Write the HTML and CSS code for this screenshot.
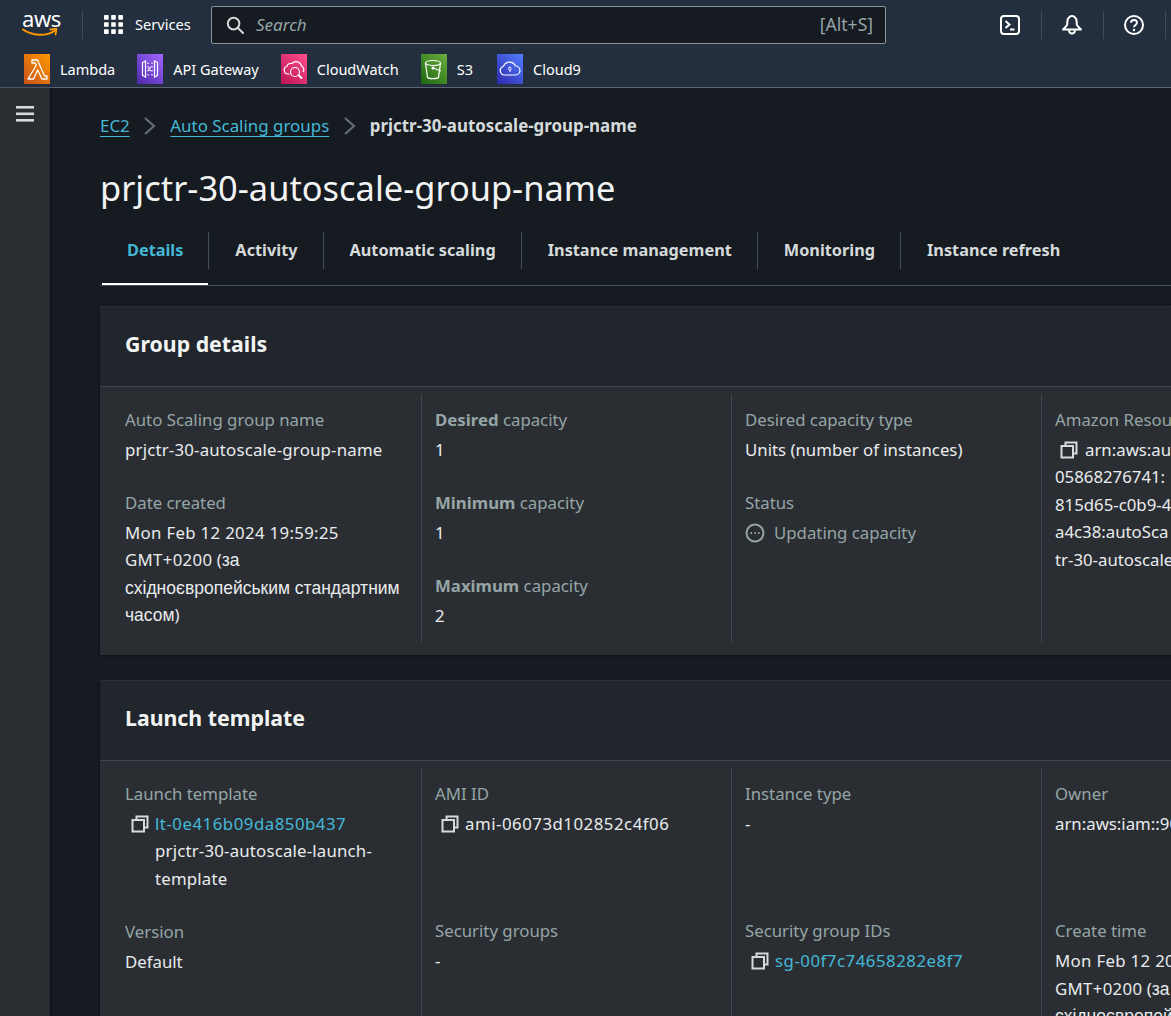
FILE: index.html
```html
<!DOCTYPE html>
<html lang="en">
<head>
<meta charset="utf-8">
<title>prjctr-30-autoscale-group-name</title>
<link rel="stylesheet" href="styles.css">
</head>
<body>
<header class="topbar">
  <div class="nav-row">
    <span class="aws-logo">
      <span class="aws-word">aws</span>
      <svg class="aws-smile" viewBox="0 0 36 11" width="36" height="11"><path d="M1 2.5C10 9 24 9.5 32.5 4" fill="none" stroke="#f90" stroke-width="2" stroke-linecap="round"/><path d="M28.5 2.5L34.5 2L33.5 7.5" fill="none" stroke="#f90" stroke-width="1.8" stroke-linecap="round" stroke-linejoin="round"/></svg>
    </span>
    <span class="vsep"></span>
    <button class="services">
      <svg width="19" height="20" viewBox="0 0 18 19" fill="#fff"><rect x="0" y="0" width="4.4" height="4.4" rx=".6"/><rect x="6.8" y="0" width="4.4" height="4.4" rx=".6"/><rect x="13.6" y="0" width="4.4" height="4.4" rx=".6"/><rect x="0" y="6.8" width="4.4" height="4.4" rx=".6"/><rect x="6.8" y="6.8" width="4.4" height="4.4" rx=".6"/><rect x="13.6" y="6.8" width="4.4" height="4.4" rx=".6"/><rect x="0" y="13.6" width="4.4" height="4.4" rx=".6"/><rect x="6.8" y="13.6" width="4.4" height="4.4" rx=".6"/><rect x="13.6" y="13.6" width="4.4" height="4.4" rx=".6"/></svg>
      <span>Services</span>
    </button>
    <div class="search">
      <svg width="18" height="18" viewBox="0 0 18 18" fill="none" stroke="#d5dbdb" stroke-width="2"><circle cx="7.6" cy="7.6" r="5.8"/><path d="M12 12l5 5" stroke-linecap="round"/></svg>
      <span class="search-ph">Search</span>
      <span class="search-key">[Alt+S]</span>
    </div>
    <div class="tools">
      <span class="tool"><svg width="22" height="22" viewBox="0 0 22 22" fill="none" stroke="#fff" stroke-width="2"><rect x="2" y="2" width="18" height="18" rx="3"/><path d="M6.500 7l4 3.500-4 3.500M11 15.500h4.500"/></svg></span>
      <span class="tsep"></span>
      <span class="tool"><svg width="22" height="22" viewBox="0 0 22 22" fill="none" stroke="#fff" stroke-width="2" stroke-linejoin="round"><path d="M11 2c-2.800 0-4.700 3-4.700 5.500v2.500c0 1.500-2.200 3.500-4.300 5.500h18c-2.100-2-4.300-4-4.300-5.500V7.500C15.700 5 13.800 2 11 2z"/><path d="M8 15.500c0 2.500 1.300 4 3 4s3-1.500 3-4"/></svg></span>
      <span class="tsep"></span>
      <span class="tool"><svg width="22" height="22" viewBox="0 0 22 22" fill="none" stroke="#fff" stroke-width="2"><circle cx="11" cy="11" r="9"/><path d="M8 8.800c0-1.700 1.300-2.800 3-2.800s3 1.100 3 2.600c0 2.400-3 2.200-3 4.700" stroke-width="1.900"/><circle cx="11" cy="16" r="1.200" fill="#fff" stroke="none"/></svg></span>
      <span class="tsep"></span>
    </div>
  </div>
  <div class="fav-row">
    <span class="fav"><span class="fav-ic ic-lambda"><svg width="26" height="26" viewBox="0 0 26 26" fill="none" stroke="#fff" stroke-width="1.300" stroke-linejoin="round"><path d="M4 23h5.500l4.200-9 4.300 9H23v-3h-2.500L13.500 4H8v3h3.200l1 2.500z"/></svg></span>Lambda</span>
    <span class="fav"><span class="fav-ic ic-api"><svg width="26" height="26" viewBox="0 0 26 26" fill="none" stroke="#fff" stroke-width="1.200"><path d="M5.500 6.500l3-1.500v16l-3-1.500zM20.500 6.500l-3-1.500v16l3-1.500z"/><path d="M11 6.500v1.500M11 10v1.500M11 14v1.500M11 18v1.500M15 6.500v1.500M15 10v1.500M15 14v1.500M15 18v1.500M14 11l-2.500 2 2.500 2"/></svg></span>API Gateway</span>
    <span class="fav"><span class="fav-ic ic-cw"><svg width="26" height="26" viewBox="0 0 26 26" fill="none" stroke="#fff" stroke-width="1.200"><path d="M8.500 18H7a4 4 0 0 1-1-7.800 4 4 0 0 1 5-2.700A5.500 5.500 0 0 1 20.500 10a4 4 0 0 1 1.500 6"/><circle cx="14" cy="16" r="4.500"/><path d="M17.500 19l3.500 3.500" stroke-width="2"/></svg></span>CloudWatch</span>
    <span class="fav fav-s3"><span class="fav-ic ic-s3"><svg width="26" height="26" viewBox="0 0 26 26" fill="none" stroke="#fff" stroke-width="1.200"><ellipse cx="12" cy="7" rx="7.500" ry="2.500"/><path d="M4.500 7l2 14.500c1.500 1.500 9.500 1.500 11 0l2-14.500"/><path d="M12 12l8 3" /><circle cx="12" cy="12" r="1" fill="#fff"/></svg></span>S3</span>
    <span class="fav"><span class="fav-ic ic-c9"><svg width="26" height="26" viewBox="0 0 26 26" fill="none" stroke="#fff" stroke-width="1.200"><path d="M7.500 19a4.500 4.500 0 0 1-1-8.800A6.500 6.500 0 0 1 18.500 10a4.500 4.500 0 0 1 0 9z"/><path d="M13 11a1.500 1.500 0 1 0 0 3c1 0 1.300-1 1-1.800-.2-.8-.5-1.200-1-1.200M13.500 14l-.8 2" stroke-width="1"/></svg></span>Cloud9</span>
  </div>
</header>
<div class="shell">
  <aside class="side">
    <svg width="18" height="16" viewBox="0 0 18 16" fill="#d5dbdb"><rect x="0" y="0" width="18" height="2.600"/><rect x="0" y="6.500" width="18" height="2.600"/><rect x="0" y="13" width="18" height="2.600"/></svg>
  </aside>
  <main class="main">
    <nav class="crumbs">
      <a class="link-u">EC2</a>
      <svg class="chev" width="14" height="20" viewBox="0 0 14 20" fill="none" stroke="#687078" stroke-width="2"><path d="M2 2l9 8-9 8"/></svg>
      <a class="link-u">Auto Scaling groups</a>
      <svg class="chev" width="14" height="20" viewBox="0 0 14 20" fill="none" stroke="#687078" stroke-width="2"><path d="M2 2l9 8-9 8"/></svg>
      <strong>prjctr-30-autoscale-group-name</strong>
    </nav>
    <h1 class="title">prjctr-30-autoscale-group-name</h1>
    <div class="tabs">
      <span class="tab active">Details</span>
      <span class="tab">Activity</span>
      <span class="tab">Automatic scaling</span>
      <span class="tab">Instance management</span>
      <span class="tab">Monitoring</span>
      <span class="tab">Instance refresh</span>
    </div>

    <section class="card">
      <h2 class="card-head">Group details</h2>
      <div class="grid">
        <div class="col">
          <div class="kv"><div class="k">Auto Scaling group name</div><div class="v name">prjctr-30-autoscale-group-name</div></div>
          <div class="kv"><div class="k">Date created</div><div class="v"><span class="num-s">Mon Feb 12 2024 19:59:25</span><br><span class="num-s">GMT+0200</span> (<span class="cyr">за<br>східноєвропейським стандартним<br>часом</span>)</div></div>
        </div>
        <div class="col">
          <div class="kv"><div class="k"><b>Desired</b> capacity</div><div class="v">1</div></div>
          <div class="kv"><div class="k"><b>Minimum</b> capacity</div><div class="v">1</div></div>
          <div class="kv"><div class="k"><b>Maximum</b> capacity</div><div class="v">2</div></div>
        </div>
        <div class="col">
          <div class="kv"><div class="k">Desired capacity type</div><div class="v">Units (number of instances)</div></div>
          <div class="kv"><div class="k">Status</div><div class="v status"><svg width="20" height="20" viewBox="0 0 20 20" fill="none" stroke="#95a5a6" stroke-width="2"><circle cx="10" cy="10" r="8.500"/><path d="M5.500 10h1.500M9.300 10h1.500M13 10h1.500" stroke-width="2.200"/></svg>Updating capacity</div></div>
        </div>
        <div class="col last">
          <div class="kv"><div class="k">Amazon Resou</div><div class="v arn"><span class="copy-inline"><svg class="copy" width="18" height="18" viewBox="0 0 18 18" fill="none" stroke="#d5dbdb" stroke-width="2"><path d="M5.500 5V1.500h11v11H13"/><rect x="1.500" y="5" width="11.500" height="11.500"/></svg></span>arn:aws:aut<br>05868276741:<br>815d65-c0b9-4<br>a4c38:autoSca<br>tr-30-autoscale</div></div>
        </div>
      </div>
    </section>

    <section class="card second">
      <h2 class="card-head">Launch template</h2>
      <div class="grid">
        <div class="col">
          <div class="kv"><div class="k">Launch template</div><div class="v copy-row"><svg class="copy" width="18" height="18" viewBox="0 0 18 18" fill="none" stroke="#d5dbdb" stroke-width="2"><path d="M5.500 5V1.500h11v11H13"/><rect x="1.500" y="5" width="11.500" height="11.500"/></svg><div><a class="link num">lt-0e416b09da850b437</a><br><span class="name">prjctr-30-autoscale-launch-<br>template</span></div></div></div>
          <div class="kv"><div class="k">Version</div><div class="v">Default</div></div>
        </div>
        <div class="col">
          <div class="kv tall"><div class="k">AMI ID</div><div class="v copy-row"><svg class="copy" width="18" height="18" viewBox="0 0 18 18" fill="none" stroke="#d5dbdb" stroke-width="2"><path d="M5.500 5V1.500h11v11H13"/><rect x="1.500" y="5" width="11.500" height="11.500"/></svg><div class="num">ami-06073d102852c4f06</div></div></div>
          <div class="kv"><div class="k">Security groups</div><div class="v">-</div></div>
        </div>
        <div class="col">
          <div class="kv tall"><div class="k">Instance type</div><div class="v">-</div></div>
          <div class="kv"><div class="k">Security group IDs</div><div class="v copy-row"><svg class="copy" width="18" height="18" viewBox="0 0 18 18" fill="none" stroke="#d5dbdb" stroke-width="2"><path d="M5.500 5V1.500h11v11H13"/><rect x="1.500" y="5" width="11.500" height="11.500"/></svg><div><a class="link num">sg-00f7c74658282e8f7</a></div></div></div>
        </div>
        <div class="col last">
          <div class="kv tall"><div class="k">Owner</div><div class="v arn">arn:aws:iam::90</div></div>
          <div class="kv"><div class="k">Create time</div><div class="v arn"><span class="num-s">Mon Feb 12 20</span><br><span class="num-s">GMT+0200</span> (<span class="cyr">за<br>східноєвропей</span></div></div>
        </div>
      </div>
    </section>
  </main>
</div>
</body>
</html>
```
FILE: styles.css
```css
* { box-sizing: border-box; }
html, body { margin: 0; height: 100%; overflow: hidden; }
body {
  width: 1171px; height: 1016px;
  background: #161a21;
  color: #e9ebed;
  font-family: "Noto Sans", "Open Sans", sans-serif;
  font-size: 16.8px;
  line-height: 27.4px;
}
.topbar { height: 88px; background: #232f3e; border-bottom: 1px solid #5b6570; }
.nav-row { height: 50px; display: flex; align-items: center; padding: 0 0 0 22px; }
.nav-row > * { flex: none; }
.aws-logo { width: 38px; height: 34px; display: flex; flex-direction: column; align-items: flex-start; }
.aws-word { color: #fff; font-size: 22px; line-height: 20px; font-weight: 400; letter-spacing: -.4px; }
.aws-smile { margin-top: -1px; }
.vsep { width: 1px; height: 28px; background: #414d5c; margin: 0 21px 0 22px; }
.services { display: flex; align-items: center; gap: 12px; background: none; border: 0; padding: 0; color: #fff; font: inherit; font-size: 14.6px; width: 107px; white-space: nowrap; }
.search { width: 675px; height: 38px; display: flex; align-items: center; padding: 0 12px 0 14px; background: #161a21; border: 1px solid #8d9499; border-radius: 2px; margin-top: -1px; }
.search-ph { font-style: italic; color: #95a5a6; margin-left: 12px; flex: 1; font-size: 17px; }
.search-key { color: #95a5a6; font-size: 17.5px; }
.tools { display: flex; align-items: center; margin-left: 113px; }
.tool { width: 22px; height: 22px; display: block; flex: none; }
.tool svg { display: block; }
.tsep { width: 1px; height: 28px; flex: none; background: #414d5c; margin: 0 19.5px; }
.fav-row { height: 37px; display: flex; align-items: flex-start; padding: 4px 0 0 24px; }
.fav { display: flex; align-items: center; gap: 10px; color: #fff; font-size: 14.5px; line-height: 26px; margin-right: 22px; white-space: nowrap; }
.fav-s3 { margin-right: 24px; }
.fav-ic { width: 26px; height: 30px; display: flex; align-items: center; justify-content: center; }
.ic-lambda { background: linear-gradient(45deg, #c8511b, #f90); }
.ic-api { background: linear-gradient(45deg, #4d27a8, #a166ff); }
.ic-cw { background: linear-gradient(45deg, #bc1356, #ff4f8b); }
.ic-s3 { background: linear-gradient(45deg, #1b660f, #6cae3e); }
.ic-c9 { background: linear-gradient(45deg, #2e27ad, #527fff); }
.shell { display: flex; height: 928px; }
.side { width: 50px; flex: none; background: #2a2e33; padding: 18px 0 0 16px; box-shadow: 1px 0 2px rgba(0,0,0,.4); }
.side svg { display: block; }
.main { flex: none; width: 1121px; padding: 0 0 0 50px; overflow: hidden; }
.crumbs { display: flex; align-items: center; height: 28px; margin-top: 24px; font-size: 16.9px; }
.crumbs .chev { margin: 0 13.3px; }
.crumbs strong { font-weight: 700; color: #d5dbdb; font-size: 16.9px; }
.link-u { color: #44b9d6; text-decoration: underline; text-underline-offset: 4px; }
.link { color: #44b9d6; }
.title { margin: 27px 0 0; font-size: 34.4px; line-height: 42px; font-weight: 400; color: #f2f3f3; }
.tabs { display: flex; margin-top: 19px; height: 58px; width: 1071px; border-bottom: 1px solid #414d5c; align-items: flex-start; padding-top: 4px; }
.tab { height: 37px; padding: 0 25px 0 26px; border-left: 1px solid #414d5c; font-weight: 700; color: #d5dbdb; line-height: 36px; font-size: 16.3px; white-space: nowrap; position: relative; }
.tab:first-child { border-left: 0; margin-left: 2px; padding-left: 25px; }
.tab.active { color: #44b9d6; }
.tab.active::after { content: ""; position: absolute; left: 0; right: 0; top: 51px; height: 2px; background: #fff; }
.card { width: 1071px; margin-top: 20px; background: #2a2e33; box-shadow: 0 1px 2px rgba(0,0,0,.5); border-top: 1px solid #2c3036; padding-bottom: 13px; }
.card.second { margin-top: 25px; padding-bottom: 0; }
.card-head { margin: 0; height: 80px; padding: 0 25px; background: #21252c; border-bottom: 1px solid #414750; font-size: 21.3px; line-height: 74px; font-weight: 700; color: #f2f3f3; }
.grid { display: grid; grid-template-columns: 321px repeat(3, 310px); padding-top: 7px; }
.col { padding: 12px 20px 0 25px; border-left: 1px solid #414750; height: 248px; }
.second .col { height: 260px; }
.col:first-child { border-left: 0; }
.col + .col { padding-left: 13px; }
.kv { margin-bottom: 25.4px; }
.k { color: #95a5a6; line-height: 28px; height: 30px; }
.k b { font-weight: 700; }
.v { color: #e9ebed; }
.name { letter-spacing: .2px; }
.num { letter-spacing: .52px; }
.num-s { letter-spacing: .33px; }
.cyr { font-family: "Liberation Sans", Arial, sans-serif; font-size: 17.5px; line-height: 1; }
.status { display: flex; align-items: center; gap: 9px; color: #95a5a6; }
.copy { flex: none; margin-right: 6px; }
.copy-inline { display: inline-block; width: 30px; height: 18px; line-height: 0; vertical-align: -3px; padding-left: 5px; }
.arn { white-space: nowrap; }
.copy-row { display: flex; align-items: flex-start; padding-left: 6px; }
.copy-row .copy { margin-top: 5px; }
.tall { min-height: 112px; }
```
